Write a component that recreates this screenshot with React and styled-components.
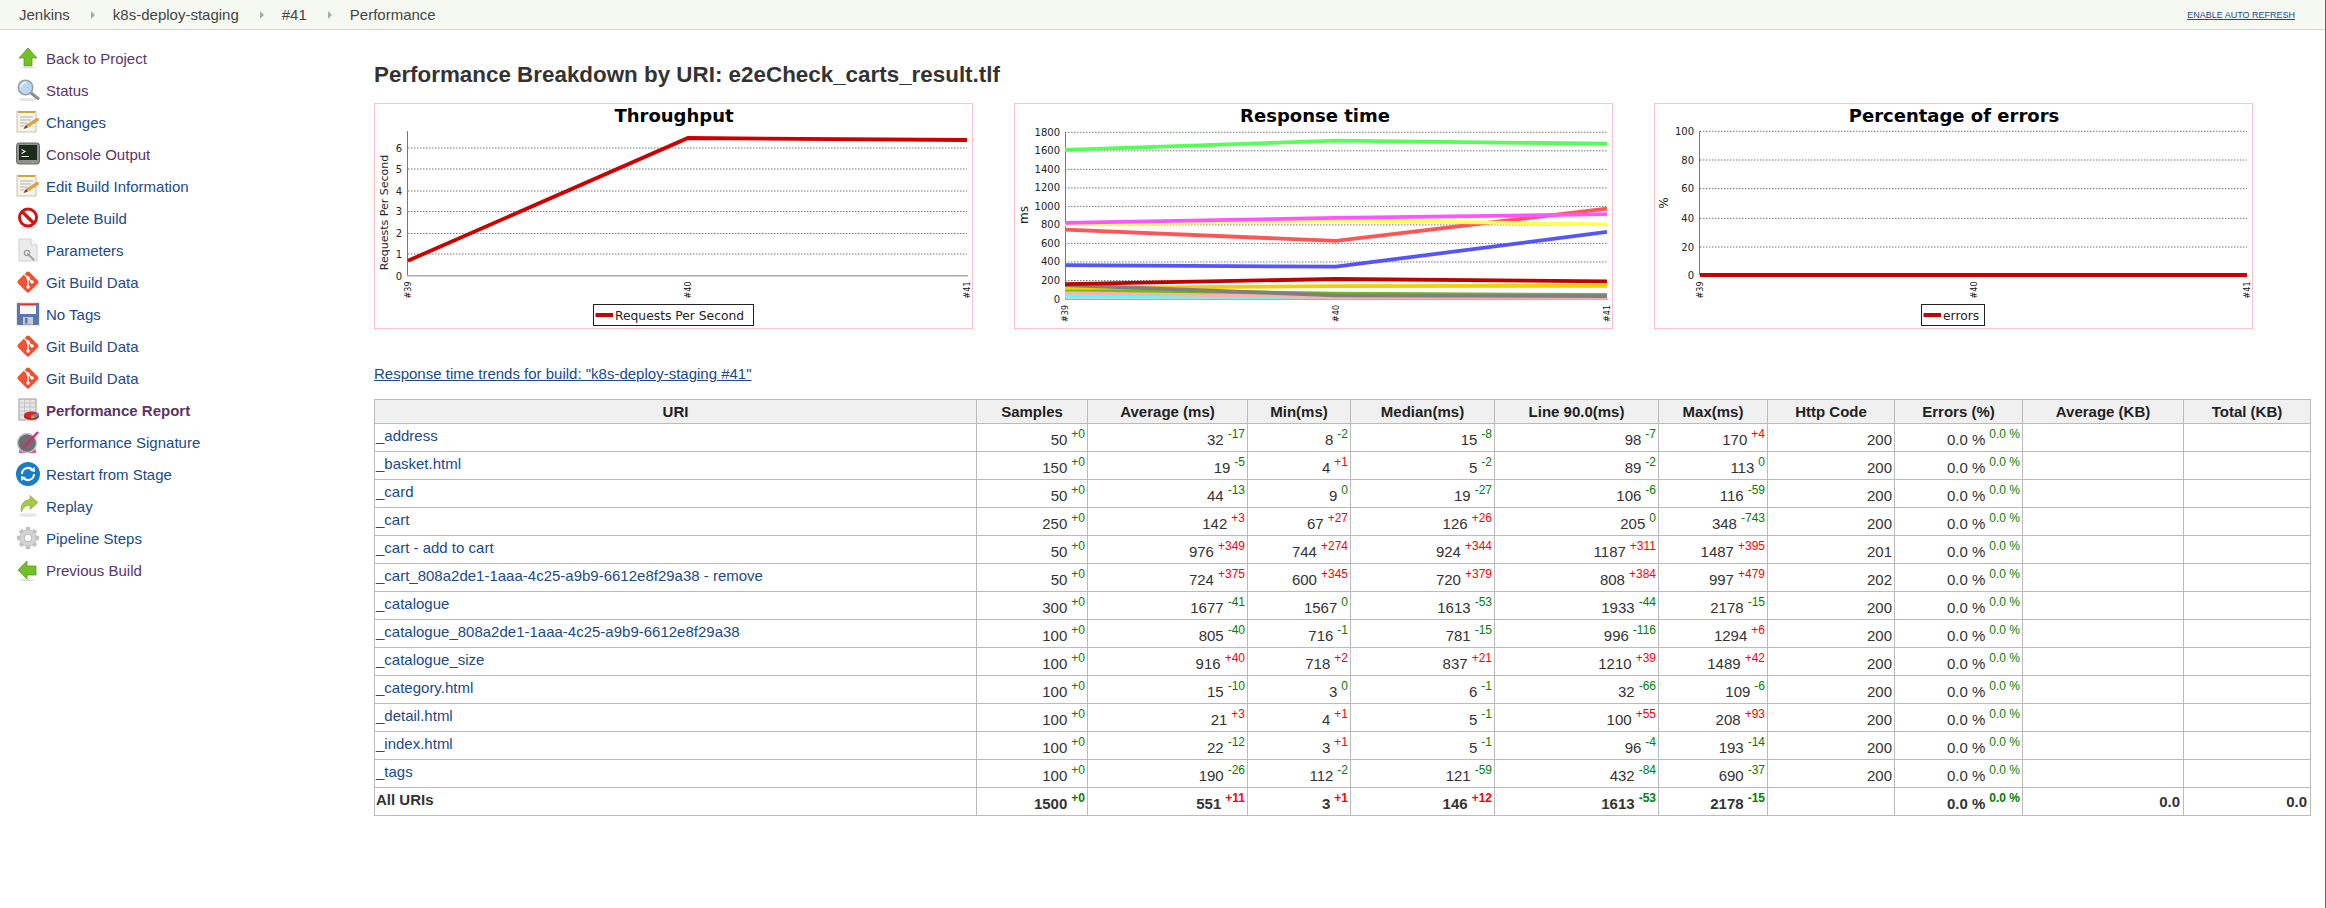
import React from 'react'
import styled, { createGlobalStyle } from 'styled-components'

const GlobalStyle = createGlobalStyle`
  html, body { margin: 0; padding: 0; background: #fff; }
  body {
    font-family: "Liberation Sans", Arial, sans-serif;
    font-size: 15px;
    color: #333;
  }
`

const Page = styled.div`
  min-height: 908px;
  border-right: 1px solid #2b6fb5;
  box-sizing: border-box;
`

const TopBar = styled.div`
  display: flex;
  align-items: center;
  justify-content: space-between;
  height: 29px;
  padding: 0 30px 0 19px;
  background: #f6f9f1;
  border-bottom: 1px solid #d3d7cf;
`

const Crumbs = styled.div`
  display: flex;
  align-items: center;
`

const Crumb = styled.span`
  color: #444;
`

const CrumbArrow = styled.span`
  width: 0;
  height: 0;
  margin: 0 18px 0 21px;
  border-left: 4px solid #a9aba6;
  border-top: 4px solid transparent;
  border-bottom: 4px solid transparent;
`

const RefreshLink = styled.a`
  font-size: 9px;
  color: #204a87;
  text-decoration: underline;
`

const Body = styled.div`
  display: flex;
`

const Side = styled.nav`
  flex: 0 0 374px;
  box-sizing: border-box;
  padding: 12px 0 0 16px;
`

const SideRow = styled.div`
  display: flex;
  align-items: center;
  height: 32px;
  gap: 6px;
  color: ${(p) => (p.$visited ? '#5c3566' : '#204a87')};
  font-weight: ${(p) => (p.$active ? 'bold' : 'normal')};
  svg { flex: none; width: 24px; height: 24px; }
`

const Main = styled.main`
  flex: 1;
  min-width: 0;
`

const Title = styled.h1`
  margin: 31px 0 0;
  font-size: 22.4px;
  line-height: 28px;
  font-weight: bold;
  color: #333;
`

const Charts = styled.div`
  display: flex;
  gap: 41px;
  margin-top: 14px;
`

const ChartBox = styled.div`
  width: 597px;
  height: 224px;
  border: 1px solid #ffc0cb;
  svg { display: block; }
`

const ChartTitle = styled.text`
  font: bold 18px "DejaVu Sans", sans-serif;
  text-anchor: middle;
  fill: #000;
`

const Tick = styled.text`
  font: 10px "DejaVu Sans", sans-serif;
  text-anchor: end;
  fill: #222;
`

const XTick = styled.text`
  font: 8px "DejaVu Sans", sans-serif;
  text-anchor: end;
  fill: #111;
`

const AxisLabel = styled.text`
  font: ${(p) => p.$size}px "DejaVu Sans", sans-serif;
  text-anchor: middle;
  fill: #222;
`

const LegendText = styled.text`
  font: 12.3px "DejaVu Sans", sans-serif;
  fill: #222;
`

const TrendLink = styled.a`
  display: block;
  margin-top: 36px;
  line-height: 18px;
  color: #204a87;
  text-decoration: underline;
`

const Table = styled.table`
  margin-top: 16px;
  width: 1937px;
  table-layout: fixed;
  border-collapse: collapse;
  font-size: 15px;
`

const Th = styled.th`
  height: 24px;
  box-sizing: border-box;
  padding: 0 3px;
  background: #f0f0f0;
  border: 1px solid #bbb;
  color: #222;
  font-weight: bold;
  text-align: center;
`

const Td = styled.td`
  height: 28px;
  padding: ${(p) => (p.$num ? '7px 2px 0 0' : '3px 3px 0 1px')};
  box-sizing: border-box;
  border: 1px solid #bbb;
  vertical-align: top;
  line-height: 17px;
  white-space: nowrap;
  text-align: ${(p) => (p.$num ? 'right' : 'left')};
  font-weight: ${(p) => (p.$total ? 'bold' : 'normal')};
  color: #333;
`

const UriLink = styled.a`
  color: #204a87;
`

const TotalKb = styled.span`
  display: block;
  margin-top: -2px;
  padding-right: 1px;
`

const Diff = styled.sup`
  position: relative;
  top: -7px;
  margin-left: 4px;
  font-size: 12px;
  line-height: 0;
  vertical-align: baseline;
  color: ${(p) => (p.$up ? '#f00' : '#008000')};
`

// icons, 24 x 24, hand drawn after the Jenkins tango set
const BackIcon = () => (
  <svg viewBox="0 0 24 24">
    <path d="M12 2 L21 12 H16 V20 H8 V12 H3 Z" fill="#73c02a" stroke="#4e9a06" strokeWidth=".7" />
    <ellipse cx="12" cy="21.5" rx="7" ry="1" fill="#ddd" />
  </svg>
)

const PrevIcon = () => (
  <svg viewBox="0 0 24 24">
    <path d="M2 12 L11 3 V8 H20 V17 H11 V21 Z" fill="#73c02a" stroke="#4e9a06" strokeWidth=".7" />
    <ellipse cx="11" cy="22" rx="7" ry="1" fill="#ddd" />
  </svg>
)

const SearchIcon = () => (
  <svg viewBox="0 0 24 24">
    <ellipse cx="12" cy="21.5" rx="9" ry="1.6" fill="#e4e4e4" />
    <path d="M15 15 L22 20.5" stroke="#8b8d89" strokeWidth="3" strokeLinecap="round" />
    <circle cx="9.5" cy="9.5" r="7.3" fill="#bcd6f0" stroke="#9aa0a6" strokeWidth="1.6" />
    <path d="M5 9 A5 5 0 0 1 10 4.5" fill="none" stroke="#eef6ff" strokeWidth="1.6" />
  </svg>
)

const NotepadIcon = () => (
  <svg viewBox="0 0 24 24">
    <rect x="1" y="1.5" width="19" height="20.5" fill="#f6f4e8" stroke="#c4c2b4" />
    <rect x="2" y="1" width="17" height="2" fill="#c9a54a" />
    <path d="M4 7 H17 M4 10 H15 M4 13 H11 M4 16 H8" stroke="#b4b4ac" strokeWidth="1" />
    <path d="M8 18.5 L10 15 L21.5 8 L23 10 L11.5 17.5 Z" fill="#e8a33a" stroke="#9a6a1a" strokeWidth=".4" />
    <path d="M7.5 19 L10 15 L11.5 17.5 Z" fill="#555" />
  </svg>
)

const TerminalIcon = () => (
  <svg viewBox="0 0 24 24">
    <rect x="0.5" y="1" width="23" height="21" rx="2.5" fill="#8f918c" stroke="#6a6c68" />
    <rect x="3" y="3" width="18" height="15" fill="#1f2a1a" />
    <path d="M5.5 7.5 L9 9.5 L5.5 11.5 M5.5 14.5 H13" fill="none" stroke="#e8f0e0" strokeWidth="1.2" />
    <rect x="16" y="19.5" width="1.5" height="1" fill="#8ae234" />
  </svg>
)

const DeleteIcon = () => (
  <svg viewBox="0 0 24 24">
    <ellipse cx="12" cy="21.5" rx="8" ry="1.4" fill="#e2e2e2" />
    <circle cx="12" cy="11.5" r="8.5" fill="#fff" stroke="#cc1515" strokeWidth="3" />
    <path d="M6 5.5 L18 17.5" stroke="#cc1515" strokeWidth="3.4" />
  </svg>
)

const ParamsIcon = () => (
  <svg viewBox="0 0 24 24">
    <path d="M3 1 H15 L21 7 V23 H3 Z" fill="#ececec" stroke="#cfcfcf" />
    <path d="M15 1 V7 H21" fill="#fafafa" stroke="#cfcfcf" />
    <path d="M11 16 L15 19 L18 22" stroke="#a0a0a0" strokeWidth="2" fill="none" />
    <circle cx="11" cy="15" r="2.6" fill="none" stroke="#a0a0a0" strokeWidth="1.4" />
  </svg>
)

const GitIcon = () => (
  <svg viewBox="0 0 24 24">
    <rect x="4" y="4" width="16" height="16" rx="2" transform="rotate(45 12 12)" fill="#f05133" />
    <path d="M8.5 4.5 L16 12 M12 8 V17" stroke="#fff" strokeWidth="1.5" fill="none" />
    <circle cx="12" cy="8" r="1.7" fill="#fff" />
    <circle cx="16" cy="12" r="1.7" fill="#fff" />
    <circle cx="12" cy="17" r="1.7" fill="#fff" />
  </svg>
)

const SaveIcon = () => (
  <svg viewBox="0 0 24 24">
    <rect x="0" y="0" width="24" height="24" fill="#e8e8e8" />
    <rect x="1" y="1" width="22" height="22" rx="1" fill="#5a76ad" />
    <rect x="4" y="1.5" width="16" height="10.5" fill="#f8f8f8" />
    <rect x="4" y="1.5" width="16" height="2" fill="#d9342b" />
    <rect x="7" y="15" width="10" height="7.5" fill="#c8ccd2" />
    <rect x="9" y="16" width="2.5" height="5.5" fill="#5a76ad" />
  </svg>
)

const ReportIcon = () => (
  <svg viewBox="0 0 24 24">
    <rect x="3" y="1" width="17" height="21" fill="#e6e6e6" stroke="#9a9a9a" />
    <path d="M3 5 H20 M3 9 H20 M3 13 H20 M3 17 H20 M8.5 1 V22 M14 1 V22" stroke="#bdbdbd" strokeWidth=".8" />
    <ellipse cx="15.5" cy="18.5" rx="7.5" ry="3.2" fill="#8f1414" />
    <ellipse cx="15.5" cy="17" rx="7.5" ry="3.6" fill="#d8262a" />
    <path d="M15.5 17 L22 15 A8 4 0 0 1 20 19.5 Z" fill="#5b8ad0" />
    <path d="M15.5 17 L20 19.5 A8 4 0 0 1 15 20.5 Z" fill="#8ac040" />
  </svg>
)

const SignatureIcon = () => (
  <svg viewBox="0 0 24 24">
    <rect x="3" y="19.5" width="17" height="3.5" fill="#f24ea0" />
    <circle cx="11" cy="13" r="9.5" fill="#6e6e70" stroke="#c8c8c8" strokeWidth="1.4" />
    <path d="M7 18 L22 2" stroke="#e8187c" strokeWidth="2" />
  </svg>
)

const RestartIcon = () => (
  <svg viewBox="0 0 24 24">
    <circle cx="12" cy="12" r="12" fill="#1a7dc4" />
    <path d="M6 12 A6 6 0 0 1 16.5 8" fill="none" stroke="#fff" strokeWidth="2" />
    <path d="M18 12 A6 6 0 0 1 7.5 16" fill="none" stroke="#fff" strokeWidth="2" />
    <path d="M14 8.8 L19 10 L18.5 5 Z M10 15.2 L5 14 L5.5 19 Z" fill="#fff" />
  </svg>
)

const ReplayIcon = () => (
  <svg viewBox="0 0 24 24">
    <ellipse cx="12" cy="21" rx="9" ry="1.8" fill="#e6e6e6" />
    <path d="M14 1.5 L22 8.5 L14 15.5 V11.5 C9.5 11.5 7 13.5 5.5 18 C3.5 10.5 8 6 14 5.5 Z" fill="#a8c64a" stroke="#8aa535" strokeWidth=".6" />
  </svg>
)

const GearIcon = () => (
  <svg viewBox="0 0 24 24">
    <path
      d="M12 1 V23 M1 12 H23 M4.2 4.2 L19.8 19.8 M19.8 4.2 L4.2 19.8"
      stroke="#c2c2c2"
      strokeWidth="4.4"
    />
    <circle cx="12" cy="12" r="8.2" fill="#d4d4d4" stroke="#bdbdbd" strokeWidth=".8" />
    <circle cx="12" cy="12" r="3.8" fill="#fff" stroke="#aaa" strokeWidth=".8" />
  </svg>
)

const sideItems = [
  ['Back to Project', BackIcon, true],
  ['Status', SearchIcon, true],
  ['Changes', NotepadIcon],
  ['Console Output', TerminalIcon, true],
  ['Edit Build Information', NotepadIcon],
  ['Delete Build', DeleteIcon],
  ['Parameters', ParamsIcon],
  ['Git Build Data', GitIcon],
  ['No Tags', SaveIcon],
  ['Git Build Data', GitIcon],
  ['Git Build Data', GitIcon],
  ['Performance Report', ReportIcon, true, true],
  ['Performance Signature', SignatureIcon],
  ['Restart from Stage', RestartIcon],
  ['Replay', ReplayIcon],
  ['Pipeline Steps', GearIcon],
  ['Previous Build', PrevIcon, true],
]

const Grid = ({ x1, x2, ticks, tickX }) =>
  ticks.map(([label, y]) => (
    <g key={label}>
      <line x1={x1} x2={x2} y1={y} y2={y} stroke="#777" strokeDasharray="1.5 1.5" />
      <Tick x={tickX} y={y + 3.5}>{label}</Tick>
    </g>
  ))

const XLabels = ({ xs, y }) =>
  ['#39', '#40', '#41'].map((t, i) => (
    <XTick key={t} transform={`translate(${xs[i] + 3} ${y}) rotate(-90)`}>{t}</XTick>
  ))

const Series = ({ xs, ys, color }) => (
  <polyline
    points={xs.map((x, i) => `${x},${ys[i]}`).join(' ')}
    fill="none"
    stroke={color}
    strokeWidth="3.8"
  />
)

const Legend = ({ x, w, label }) => (
  <g>
    <rect x={x + 0.5} y={304.5} width={w} height={21} fill="#fff" stroke="#222" />
    <line x1={x + 2.5} x2={x + 20} y1={315} y2={315} stroke="#cc0000" strokeWidth="4" />
    <LegendText x={x + 22} y={319.5}>{label}</LegendText>
  </g>
)

const ThroughputChart = () => {
  const xs = [409, 689, 968]
  const ticks = [['6', 148], ['5', 169], ['4', 191], ['3', 211.5], ['2', 233.5], ['1', 254]]
  return (
    <ChartBox>
      <svg width="597" height="224" viewBox="376 104 597 224">
        <ChartTitle x="675" y="122">Throughput</ChartTitle>
        <Grid x1={409} x2={968} ticks={ticks} tickX={403} />
        <Tick x="403" y="279.5">0</Tick>
        <line x1="408.5" x2="408.5" y1="131" y2="276" stroke="#777" />
        <line x1="408" x2="969" y1="275.8" y2="275.8" stroke="#aaa" strokeWidth="1.5" />
        <Series xs={xs} ys={[260.7, 138, 140]} color="#cc0000" />
        <XLabels xs={xs} y={281.5} />
        <AxisLabel $size={11} transform="translate(389 212.5) rotate(-90)">Requests Per Second</AxisLabel>
        <Legend x={594} w={160} label="Requests Per Second" />
      </svg>
    </ChartBox>
  )
}

const msToY = (v) => 299 - v * 0.09261

const responseSeries = [
  ['#ff5555', [750, 627, 976]],
  ['#5555ff', [365, 349, 724]],
  ['#55ff55', [1610, 1710, 1677]],
  ['#ffff55', [805, 850, 805]],
  ['#ff55ff', [822, 876, 916]],
  ['#55ffff', [30, 20, 15]],
  ['#ffafaf', [70, 18, 21]],
  ['#6fbf10', [105, 57, 44]],
  ['#f0d000', [120, 139, 142]],
  ['#808080', [150, 40, 32]],
  ['#c00000', [160, 216, 190]],
]

const ResponseChart = () => {
  const xs = [1066, 1337, 1608]
  const ticks = [1800, 1600, 1400, 1200, 1000, 800, 600, 400, 200].map((v) => [String(v), msToY(v)])
  return (
    <ChartBox>
      <svg width="597" height="224" viewBox="1016 104 597 224">
        <ChartTitle x="1316" y="122">Response time</ChartTitle>
        <Grid x1={1066} x2={1608} ticks={ticks} tickX={1061} />
        <Tick x="1061" y="302.5">0</Tick>
        <line x1="1066.5" x2="1066.5" y1="132" y2="299" stroke="#777" />
        <line x1="1066" x2="1609" y1="299.3" y2="299.3" stroke="#aaa" strokeWidth="1.5" />
        {responseSeries.map(([color, vals]) => (
          <Series key={color} xs={xs} ys={vals.map(msToY)} color={color} />
        ))}
        <XLabels xs={xs} y={305} />
        <AxisLabel $size={12} transform="translate(1028.5 215) rotate(-90)">ms</AxisLabel>
      </svg>
    </ChartBox>
  )
}

const ErrorsChart = () => {
  const xs = [1701, 1975, 2248]
  const ticks = [['100', 131.3], ['80', 160], ['60', 188.7], ['40', 218.3], ['20', 247]]
  return (
    <ChartBox>
      <svg width="597" height="224" viewBox="1656 104 597 224">
        <ChartTitle x="1955" y="122">Percentage of errors</ChartTitle>
        <Grid x1={1701} x2={2248} ticks={ticks} tickX={1695} />
        <Tick x="1695" y="278.5">0</Tick>
        <line x1="1700.5" x2="1700.5" y1="131" y2="275" stroke="#777" />
        <Series xs={xs} ys={[275, 275, 275]} color="#cc0000" />
        <XLabels xs={xs} y={281.5} />
        <AxisLabel $size={12} transform="translate(1668.5 203) rotate(-90)">%</AxisLabel>
        <Legend x={1922} w={63} label="errors" />
      </svg>
    </ChartBox>
  )
}

const colWidths = [602, 111, 160, 103, 144, 164, 109, 127, 128, 161, 127]

const columns = [
  'URI', 'Samples', 'Average (ms)', 'Min(ms)', 'Median(ms)', 'Line 90.0(ms)',
  'Max(ms)', 'Http Code', 'Errors (%)', 'Average (KB)', 'Total (KB)',
]

const rows = [
  ['_address', '50 +0', '32 -17', '8 -2', '15 -8', '98 -7', '170 +4', '200'],
  ['_basket.html', '150 +0', '19 -5', '4 +1', '5 -2', '89 -2', '113 0', '200'],
  ['_card', '50 +0', '44 -13', '9 0', '19 -27', '106 -6', '116 -59', '200'],
  ['_cart', '250 +0', '142 +3', '67 +27', '126 +26', '205 0', '348 -743', '200'],
  ['_cart - add to cart', '50 +0', '976 +349', '744 +274', '924 +344', '1187 +311', '1487 +395', '201'],
  ['_cart_808a2de1-1aaa-4c25-a9b9-6612e8f29a38 - remove', '50 +0', '724 +375', '600 +345', '720 +379', '808 +384', '997 +479', '202'],
  ['_catalogue', '300 +0', '1677 -41', '1567 0', '1613 -53', '1933 -44', '2178 -15', '200'],
  ['_catalogue_808a2de1-1aaa-4c25-a9b9-6612e8f29a38', '100 +0', '805 -40', '716 -1', '781 -15', '996 -116', '1294 +6', '200'],
  ['_catalogue_size', '100 +0', '916 +40', '718 +2', '837 +21', '1210 +39', '1489 +42', '200'],
  ['_category.html', '100 +0', '15 -10', '3 0', '6 -1', '32 -66', '109 -6', '200'],
  ['_detail.html', '100 +0', '21 +3', '4 +1', '5 -1', '100 +55', '208 +93', '200'],
  ['_index.html', '100 +0', '22 -12', '3 +1', '5 -1', '96 -4', '193 -14', '200'],
  ['_tags', '100 +0', '190 -26', '112 -2', '121 -59', '432 -84', '690 -37', '200'],
]

const totals = ['1500 +0', '551 +11', '3 +1', '146 +12', '1613 -53', '2178 -15']

const Metric = ({ value, total }) => {
  const [num, diff] = value.split(' ')
  return (
    <Td $num $total={total}>
      {num}
      <Diff $up={diff.startsWith('+') && diff !== '+0'}>{diff}</Diff>
    </Td>
  )
}

const ErrorCell = ({ total }) => (
  <Td $num $total={total}>
    0.0 %<Diff>0.0 %</Diff>
  </Td>
)

const App = () => (
  <Page>
    <GlobalStyle />
    <TopBar>
      <Crumbs>
        <Crumb>Jenkins</Crumb>
        <CrumbArrow />
        <Crumb>k8s-deploy-staging</Crumb>
        <CrumbArrow />
        <Crumb>#41</Crumb>
        <CrumbArrow />
        <Crumb>Performance</Crumb>
      </Crumbs>
      <RefreshLink>ENABLE AUTO REFRESH</RefreshLink>
    </TopBar>
    <Body>
      <Side>
        {sideItems.map(([label, Icon, visited, active], i) => (
          <SideRow key={i} $visited={visited} $active={active}>
            <Icon />
            {label}
          </SideRow>
        ))}
      </Side>
      <Main>
        <Title>Performance Breakdown by URI: e2eCheck_carts_result.tlf</Title>
        <Charts>
          <ThroughputChart />
          <ResponseChart />
          <ErrorsChart />
        </Charts>
        <TrendLink>Response time trends for build: "k8s-deploy-staging #41"</TrendLink>
        <Table>
          <colgroup>
            {colWidths.map((w, i) => <col key={i} width={w} />)}
          </colgroup>
          <thead>
            <tr>
              {columns.map((c) => <Th key={c}>{c}</Th>)}
            </tr>
          </thead>
          <tbody>
            {rows.map((r) => (
              <tr key={r[0]}>
                <Td><UriLink>{r[0]}</UriLink></Td>
                {r.slice(1, 7).map((v, i) => <Metric key={i} value={v} />)}
                <Td $num>{r[7]}</Td>
                <ErrorCell />
                <Td />
                <Td />
              </tr>
            ))}
            <tr>
              <Td $total>All URIs</Td>
              {totals.map((v, i) => <Metric key={i} value={v} total />)}
              <Td $num $total />
              <ErrorCell total />
              <Td $num $total><TotalKb>0.0</TotalKb></Td>
              <Td $num $total><TotalKb>0.0</TotalKb></Td>
            </tr>
          </tbody>
        </Table>
      </Main>
    </Body>
  </Page>
)

export default App
